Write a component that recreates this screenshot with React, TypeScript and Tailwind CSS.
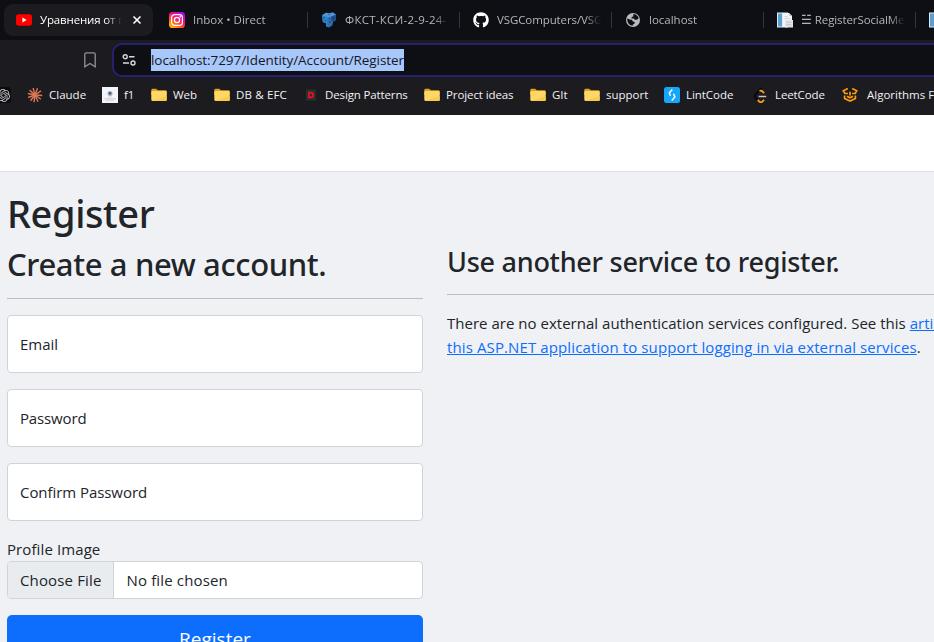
import type { ReactNode } from "react";
import { SiOpenai } from "react-icons/si";
import { FaGithub } from "react-icons/fa";

function YouTubeIcon() {
  return (
    <svg viewBox="0 0 16 16" className="size-4 shrink-0">
      <rect x="0" y="2.3" width="16" height="11.4" rx="2.6" fill="#ff0000" />
      <path d="M6.4 5.6v4.8L10.6 8z" fill="#fff" />
    </svg>
  );
}

function InstagramIcon() {
  return (
    <svg viewBox="0 0 16 16" className="size-4 shrink-0">
      <defs>
        <linearGradient id="ig" x1="0.1" y1="1" x2="0.8" y2="0">
          <stop offset="0" stopColor="#ffc800" />
          <stop offset="0.35" stopColor="#ff5a1f" />
          <stop offset="0.65" stopColor="#f0088c" />
          <stop offset="1" stopColor="#a010f0" />
        </linearGradient>
      </defs>
      <rect width="16" height="16" rx="3.6" fill="url(#ig)" />
      <rect x="2.6" y="2.6" width="10.8" height="10.8" rx="3.2" fill="none" stroke="#fff" strokeWidth="1.2" />
      <circle cx="8" cy="8" r="2.6" fill="none" stroke="#fff" strokeWidth="1.3" />
      <circle cx="11.2" cy="4.8" r="0.8" fill="#fff" />
    </svg>
  );
}

function ElephantIcon() {
  return (
    <svg viewBox="0 0 16 16" className="size-4 shrink-0">
      <path d="M1 3.2 5 .8l3.5.4L12 .6l3 2.2-.3 5.4-2.6 1.6-.8 3.6-3.4 2.2-2.5-1.200-.4-3.200L1.800 10z" fill="#2f6fb3" />
      <path d="M1 3.200 5 .8l3.500.4L12 .6l3 2.200-4.800 1.800-3.400.800z" fill="#4f96d8" />
      <path d="M1 3.200 6.800 5.400 6.200 11l1 4.200-2-1-.2-3L1.800 10z" fill="#2b83cc" />
      <path d="M10.200 4.600 15 2.800l-.3 5.400-2.600 1.600-1.900-.6z" fill="#1f4f8a" />
      <path d="M3 5.400v1M8.500 6.500v1M4.200 8v1M9 9.500v1.500M12.500 5.500v1M7.500 2.600h1" stroke="#10315c" strokeWidth=".9" />
    </svg>
  );
}

function GlobeIcon() {
  return (
    <svg viewBox="0 0 16 16" className="size-4 shrink-0">
      <circle cx="8" cy="8" r="7" fill="#b9babd" />
      <path d="M8.400 1.900c2.400.1 4.600 1.900 5.300 4.100l-1.600 1.700H9.700l-.7-1.300H6.600V4.900l1.700-.5zM2.300 6.500l3.200 1.300 1.500 0 .8 1.800 2 .4-.3 1.600-1.500.8-.4 1.300C4.400 13.500 1.900 10.600 2.300 6.500z" fill="#0e0f14" />
    </svg>
  );
}

function DocumentsIcon() {
  return (
    <svg viewBox="0 0 16 16" className="size-4 shrink-0">
      <rect x="0" y="0.500" width="11" height="15" fill="#dcebf6" />
      <rect x="1" y="1.500" width="4" height="13" fill="#5b9fd0" />
      <path d="M6 1h6l3 3v11H6z" fill="#f3f4f6" />
      <path d="M12 1v3h3z" fill="#c6cbd2" />
      <path d="M7.500 4.500h3M7.500 6.500h5" stroke="#c4c9cf" strokeWidth=".8" />
      <rect x="8" y="8" width="8" height="7.500" fill="#dfe2e6" />
      <path d="M9.500 10.200h5M9.500 12.800h5" stroke="#c0c4ca" strokeWidth=".9" />
    </svg>
  );
}

function FolderIcon() {
  return (
    <svg viewBox="0 0 16 16" className="size-4 shrink-0">
      <path d="M0.300 3A1.300 1.300 0 0 1 1.600 1.700h3.600L6.800 3.200h7.600a1.300 1.300 0 0 1 1.300 1.300V8H0.300z" fill="#dfa01c" />
      <rect x="0.300" y="3.900" width="15.400" height="10" rx="1.100" fill="#ffd766" />
      <path d="M1.200 13.900h13.300a1.100 1.100 0 0 0 1.200-1V9z" fill="#f9cb49" />
    </svg>
  );
}

const rays = [4, 36, 66, 98, 128, 160, 192, 222, 255, 290, 325];
function BurstIcon() {
  return (
    <svg viewBox="0 0 16 16" className="size-4 shrink-0">
      {rays.map((a) => (
        <path key={a} d="M8 8h7.300" stroke="#d97757" strokeWidth="1.400" transform={`rotate(${a} 8 8)`} />
      ))}
    </svg>
  );
}

function EmblemIcon() {
  return (
    <svg viewBox="0 0 16 16" className="size-4 shrink-0">
      <rect width="16" height="16" fill="#f4f5f8" />
      <circle cx="8" cy="6.500" r="2.500" fill="#a3aabc" />
      <circle cx="8" cy="6.300" r="1.200" fill="#4a5371" />
      <path d="M6.500 9.800h3M2 11.700h12M4 13.200h8" stroke="#c4c7d2" strokeWidth=".8" />
    </svg>
  );
}

function DesignIcon() {
  return (
    <svg viewBox="0 0 16 16" className="size-4 shrink-0">
      <rect x="3" y="2.500" width="10" height="11" rx="1" fill="#2c2c31" />
      <path d="M5.900 5.600h1.900a2.300 2.300 0 0 1 0 4.800H5.900z" fill="none" stroke="#e5131d" strokeWidth="1.700" />
    </svg>
  );
}

function LintIcon() {
  return (
    <svg viewBox="0 0 16 16" className="size-4 shrink-0">
      <rect width="16" height="16" rx="2.500" fill="#13a8fb" />
      <path d="M8.300 2.500 5.300 6l1.200 3M7.700 13.500l3.200-3.600L9.500 6.700" fill="none" stroke="#fff" strokeWidth="1.500" />
    </svg>
  );
}

function LeetIcon() {
  return (
    <svg viewBox="0 0 16 16" className="size-4 shrink-0">
      <path d="M8.500.8 2.400 7.600a2.400 2.400 0 0 0 0 3.200l3 3.100" fill="none" stroke="#070709" strokeWidth="1.700" />
      <path d="M6.500 3.900a2.600 2.600 0 0 1 2.900.5l1.700 1.700M4.700 13l1.400 1.400a2.500 2.500 0 0 0 3.500 0l1.500-1.500" fill="none" stroke="#ffa116" strokeWidth="1.800" />
      <path d="M5.600 9.500h7.600" stroke="#c4c4c4" strokeWidth="1.500" />
    </svg>
  );
}

function AlgoIcon() {
  return (
    <svg viewBox="0 0 16 16" className="size-4 shrink-0" fill="none" stroke="#ff9d0a" strokeWidth="1.700">
      <path d="M5.800 1.600 1.300 3.800l1.600 2.700h3M10.200 1.600l4.500 2.200-1.600 2.700h-3M2.600 8.600v2.800L8 14l5.400-2.600V8.600M8 4.800v3.700M5 9.200l3 1.500 3-1.500" />
    </svg>
  );
}

function Tab({ icon, title, tone }: { icon: ReactNode; title: string; tone: string }) {
  return (
    <div className="flex h-8 w-[152px] shrink-0 items-center pl-[13px]">
      {icon}
      <span className={`ml-2 w-[104px] overflow-hidden whitespace-nowrap text-[#b5b6b9] mask-r-from-85% ${tone}`}>{title}</span>
      <span className="ml-auto h-4 w-px shrink-0 bg-[#36373c]" />
    </div>
  );
}

function Bookmark({ icon, title, className }: { icon: ReactNode; title: string; className: string }) {
  return (
    <div className={`flex shrink-0 items-center gap-[6px] whitespace-nowrap ${className}`}>
      {icon}
      <span>{title}</span>
    </div>
  );
}

function Field({ label, className }: { label: string; className: string }) {
  return (
    <div className={`mb-4 flex h-[58px] items-center rounded border border-[#ced4da] bg-white px-3 ${className}`}>{label}</div>
  );
}

export default function App() {
  return (
    <div className="h-[642px] w-[934px] overflow-hidden bg-[#f0f1f5] font-['Open_Sans',sans-serif]">
      <div className="flex h-10 items-start overflow-hidden bg-[#0e0f14] pl-1 pt-1 text-[11.5px]">
        <div className="flex h-8 w-[149px] shrink-0 items-center rounded-[9px] bg-[#1c1b20] pl-3 text-white">
          <YouTubeIcon />
          <span className="ml-2 w-[82px] overflow-hidden whitespace-nowrap tracking-[-0.15px] mask-r-from-80%">Уравнения от п</span>
          <svg viewBox="0 0 10 10" className="ml-[10px] size-[10px]" stroke="#fff" strokeWidth="1.600">
            <path d="M1.500 1.500l7 7M8.500 1.500l-7 7" />
          </svg>
        </div>
        <div className="w-[3px] shrink-0" />
        <Tab icon={<InstagramIcon />} title="Inbox • Direct" tone="" />
        <Tab icon={<ElephantIcon />} title="ФКСТ-КСИ-2-9-24-1" tone="tracking-[0.25px]" />
        <Tab icon={<FaGithub className="size-4 shrink-0 text-white" />} title="VSGComputers/VSG" tone="tracking-[-0.1px]" />
        <Tab icon={<GlobeIcon />} title="localhost" tone="" />
        <Tab icon={<DocumentsIcon />} title="☱ RegisterSocialMed" tone="tracking-[-0.1px]" />
        <Tab icon={<DocumentsIcon />} title="" tone="" />
      </div>

      <div className="h-[75px] overflow-hidden bg-[#1c1b20] pt-[3px]">
        <div className="flex h-[34px] items-center">
          <svg viewBox="0 0 12 16" className="ml-[84px] h-4 w-3 shrink-0" fill="none" stroke="#929297" strokeWidth="1.300">
            <path d="M.8 2.200A1.400 1.400 0 0 1 2.200.8h7.600a1.400 1.400 0 0 1 1.400 1.400v12.600L6 11.500.8 14.800z" />
          </svg>
          <div className="-mr-4 ml-4 flex h-[34px] flex-1 items-center rounded-[10px] border-2 border-[#26216f] bg-[#0e0f14] pl-[8px]">
            <svg viewBox="0 0 14 14" className="size-[14px] shrink-0" fill="none" stroke="#d8d9dc" strokeWidth="1.400">
              <circle cx="3.200" cy="3.700" r="2" />
              <circle cx="11" cy="10" r="2" />
              <path d="M7 3.700h5.500M1 10h6" />
            </svg>
            <span className="ml-[15px] h-[22px] w-[253px] whitespace-nowrap bg-[#a8c7fa] text-[13.5px] leading-[23px] tracking-[-0.06px] text-[#16181d]">
              localhost:7297/Identity/Account/Register
            </span>
          </div>
        </div>
        <div className="flex h-9 items-center overflow-hidden text-[11.5px] text-[#f2f2f4]">
          <div className="-ml-[5px] flex size-4 shrink-0 items-center justify-center rounded-[3px] bg-[#0c0c0e]">
            <SiOpenai className="size-[13px] text-[#c6c6c8]" />
          </div>
          <Bookmark icon={<BurstIcon />} title="Claude" className="ml-4 w-[75px]" />
          <Bookmark icon={<EmblemIcon />} title="f1" className="w-[49px]" />
          <Bookmark icon={<FolderIcon />} title="Web" className="w-[63px]" />
          <Bookmark icon={<FolderIcon />} title="DB & EFC" className="w-[89px] tracking-[0.15px]" />
          <Bookmark icon={<DesignIcon />} title="Design Patterns" className="w-[121px] tracking-[-0.13px]" />
          <Bookmark icon={<FolderIcon />} title="Project ideas" className="w-[106px] tracking-[-0.1px]" />
          <Bookmark icon={<FolderIcon />} title="GIt" className="w-[54px]" />
          <Bookmark icon={<FolderIcon />} title="support" className="w-[80px]" />
          <Bookmark icon={<LintIcon />} title="LintCode" className="w-[89px] tracking-[-0.05px]" />
          <Bookmark icon={<LeetIcon />} title="LeetCode" className="w-[89px] tracking-[-0.1px]" />
          <Bookmark icon={<AlgoIcon />} title="Algorithms For" className="gap-[9px]" />
        </div>
      </div>

      <div className="h-[57px] border-b border-[#dee2e6] bg-white" />

      <main className="px-[7px] pt-4 text-[15px] leading-6 text-[#212529]">
        <h1 className="mb-2 h-12 font-['Noto_Sans'] text-[38px] leading-[50px] font-medium tracking-[-0.4px]">Register</h1>
        <div className="flex gap-6">
          <section className="w-[416px] shrink-0">
            <h2 className="h-[38px] font-['Noto_Sans'] text-[31px] leading-[40px] font-medium tracking-[-0.37px] whitespace-nowrap">
              Create a new account.
            </h2>
            <hr className="my-4 border-[#bbbdc1]" />
            <Field label="Email" className="" />
            <Field label="Password" className="tracking-[-0.15px]" />
            <Field label="Confirm Password" className="tracking-[-0.06px]" />
            <div className="mt-4 h-6 tracking-[0.1px]">Profile Image</div>
            <div className="mb-4 flex h-[38px] items-center overflow-hidden rounded border border-[#ced4da] bg-white">
              <span className="flex h-full w-[106px] items-center border-r border-[#ced4da] bg-[#e9ecef] pl-3 tracking-[0.15px]">Choose File</span>
              <span className="pl-[12.5px] tracking-[0.15px]">No file chosen</span>
            </div>
            <button className="h-12 w-full rounded-[5px] bg-[#0d6efd] text-[19px] leading-[30px] text-white">Register</button>
          </section>
          <section className="w-[640px] shrink-0">
            <h3 className="h-[34px] font-['Noto_Sans'] text-[27px] leading-[36px] font-medium tracking-[-0.26px] whitespace-nowrap">
              Use another service to register.
            </h3>
            <hr className="mb-4 mt-4 border-[#bbbdc1]" />
            <p className="tracking-[0.02px] whitespace-nowrap">
              There are no external authentication services configured. See this{" "}
              <a className="text-[#0d6efd] underline">article about setting up</a>
              <br />
              <a className="tracking-[0.115px] text-[#0d6efd] underline">this ASP.NET application to support logging in via external services</a>.
            </p>
          </section>
        </div>
      </main>
    </div>
  );
}
